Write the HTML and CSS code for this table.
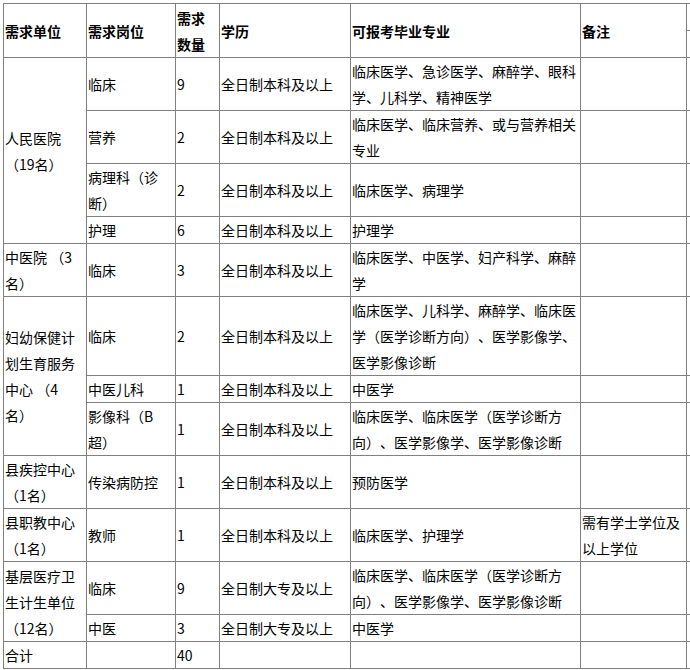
FILE: index.html
```html
<!DOCTYPE html>
<html lang="zh-CN">
<head>
<meta charset="utf-8">
<title>需求岗位表</title>
<link rel="stylesheet" href="styles.css">
</head>
<body>
<div class="page">
<table class="jobs">
  <colgroup>
    <col class="c-unit">
    <col class="c-post">
    <col class="c-num">
    <col class="c-edu">
    <col class="c-major">
    <col class="c-note">
    <col class="c-extra">
  </colgroup>
  <thead>
    <tr class="row1">
      <th rowspan="2">需求单位</th>
      <th rowspan="2">需求岗位</th>
      <th rowspan="2">需求数量</th>
      <th rowspan="2">学历</th>
      <th rowspan="2">可报考毕业专业</th>
      <th rowspan="2">备注</th>
      <th class="extra"></th>
    </tr>
    <tr class="row1">
      <th class="extra"></th>
    </tr>
  </thead>
  <tbody>
    <tr>
      <td rowspan="4">人民医院（19名）</td>
      <td>临床</td><td>9</td><td>全日制本科及以上</td>
      <td>临床医学、急诊医学、麻醉学、眼科学、儿科学、精神医学</td><td></td><td></td>
    </tr>
    <tr>
      <td>营养</td><td>2</td><td>全日制本科及以上</td>
      <td>临床医学、临床营养、或与营养相关专业</td><td></td><td></td>
    </tr>
    <tr>
      <td>病理科（诊断）</td><td>2</td><td>全日制本科及以上</td>
      <td>临床医学、病理学</td><td></td><td></td>
    </tr>
    <tr>
      <td>护理</td><td>6</td><td>全日制本科及以上</td>
      <td>护理学</td><td></td><td></td>
    </tr>
    <tr>
      <td>中医院 （3名）</td>
      <td>临床</td><td>3</td><td>全日制本科及以上</td>
      <td>临床医学、中医学、妇产科学、麻醉学</td><td></td><td></td>
    </tr>
    <tr>
      <td rowspan="3">妇幼保健计划生育服务中心 （4名）</td>
      <td>临床</td><td>2</td><td>全日制本科及以上</td>
      <td>临床医学、儿科学、麻醉学、临床医学（医学诊断方向）、医学影像学、医学影像诊断</td><td></td><td></td>
    </tr>
    <tr>
      <td>中医儿科</td><td>1</td><td>全日制本科及以上</td>
      <td>中医学</td><td></td><td></td>
    </tr>
    <tr>
      <td>影像科（B超）</td><td>1</td><td>全日制本科及以上</td>
      <td>临床医学、临床医学（医学诊断方向）、医学影像学、医学影像诊断</td><td></td><td></td>
    </tr>
    <tr>
      <td>县疾控中心（1名）</td>
      <td>传染病防控</td><td>1</td><td>全日制本科及以上</td>
      <td>预防医学</td><td></td><td></td>
    </tr>
    <tr>
      <td>县职教中心（1名）</td>
      <td>教师</td><td>1</td><td>全日制本科及以上</td>
      <td>临床医学、护理学</td><td>需有学士学位及以上学位</td><td></td>
    </tr>
    <tr>
      <td rowspan="2">基层医疗卫生计生单位（12名）</td>
      <td>临床</td><td>9</td><td>全日制大专及以上</td>
      <td>临床医学、临床医学（医学诊断方向）、医学影像学、医学影像诊断</td><td></td><td></td>
    </tr>
    <tr>
      <td>中医</td><td>3</td><td>全日制大专及以上</td>
      <td>中医学</td><td></td><td></td>
    </tr>
    <tr>
      <td>合计</td><td></td><td>40</td><td></td><td></td><td></td><td></td>
    </tr>
  </tbody>
</table>
</div>
</body>
</html>
```

FILE: styles.css
```css
html, body {
  margin: 0;
  padding: 0;
  overflow: hidden;
  background: #ffffff;
}

.page {
  box-sizing: border-box;
  padding: 3px 0 0 3px;
  width: 690px;
  height: 670px;
  overflow: hidden;
}

.jobs {
  border-collapse: collapse;
  table-layout: fixed;
  width: 723px;
  font-family: "Noto Sans CJK SC", "Noto Sans", sans-serif;
  font-size: 14px;
  line-height: 26px;
  color: #000000;
  text-spacing-trim: space-all;
}

.c-unit { width: 83px; }
.c-post { width: 89px; }
.c-num { width: 44px; }
.c-edu { width: 131px; }
.c-major { width: 230px; }
.c-note { width: 106px; }
.c-extra { width: 40px; }

.jobs th,
.jobs td {
  border: 1px solid #808080;
  padding: 0 1px;
  text-align: left;
  vertical-align: middle;
  word-break: normal;
}

.jobs th {
  font-weight: bold;
  height: 26px;
}

.jobs td {
  height: 26px;
}
```
